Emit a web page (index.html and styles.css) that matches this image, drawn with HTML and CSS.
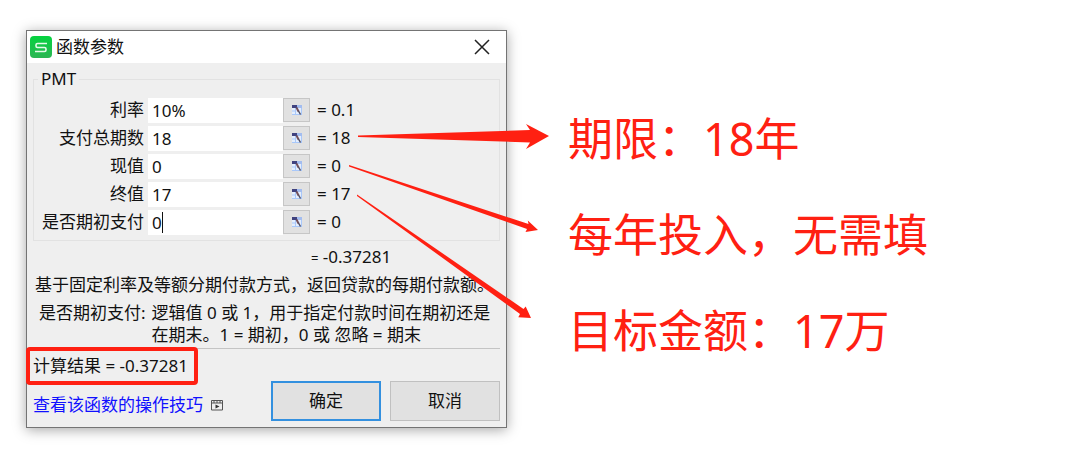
FILE: index.html
```
<!DOCTYPE html>
<html lang="zh-CN">
  <head>
    <meta charset="utf-8">
    <title>函数参数</title>
    <link rel="stylesheet" href="styles.css">
  </head>
  <body>

    <!-- shared by the five reference buttons -->
    <svg class="defs" width="0" height="0">
      <symbol id="pick" viewBox="0 0 12 12">
        <rect x="1" y="1" width="10" height="10" fill="#e4eefd"/>
        <path d="M1 10.500h10M10.500 1v10M1 7h4M4.500 4v6" fill="none" stroke="#a9c8fa"/>
        <rect x="1" y="1" width="5" height="3" fill="#40427f"/>
        <rect x="6" y="1" width="5" height="3" fill="#a3bdf0"/>
        <path d="M5.500 3.500l2 4" fill="none" stroke="#74505a" stroke-width="2"/>
        <path d="M7.500 7l2 3.500" fill="none" stroke="#4d4b60" stroke-width="1.500"/>
      </symbol>
    </svg>

    <div class="figure">
      <form class="dialog">
        <div class="titlebar">
          <svg class="logo" width="22" height="22" viewBox="0 0 22 22">
            <defs>
              <linearGradient id="green" x1="0" y1="0" x2="0" y2="1">
                <stop offset="0" stop-color="#05d33f"/>
                <stop offset="1" stop-color="#2bb553"/>
              </linearGradient>
            </defs>
            <rect width="22" height="22" rx="4" fill="url(#green)"/>
            <path d="M17 7.500H7.500Q6 7.500 6 9V10Q6 11.500 7.500 11.500H14.500Q16 11.500 16 13V14Q16 15.500 14.500 15.500H5" fill="none" stroke="#e6fbea" stroke-width="1.600"/>
          </svg>
          <h1>函数参数</h1>
          <button type="button" class="close" aria-label="关闭">
            <svg width="16" height="16" viewBox="0 0 16 16"><path d="M1 1l14 14M15 1L1 15" stroke="#222" stroke-width="1.500"/></svg>
          </button>
        </div>

        <div class="content">
          <fieldset>
            <legend>PMT</legend>
            <div class="row">
              <label for="rate">利率</label>
              <input id="rate" type="text" value="10%">
              <button type="button" class="pick" aria-label="选择利率"><svg width="12" height="12"><use href="#pick"/></svg></button>
              <output for="rate">= 0.1</output>
            </div>
            <div class="row">
              <label for="nper">支付总期数</label>
              <input id="nper" type="text" value="18">
              <button type="button" class="pick" aria-label="选择支付总期数"><svg width="12" height="12"><use href="#pick"/></svg></button>
              <output for="nper">= 18</output>
            </div>
            <div class="row">
              <label for="pv">现值</label>
              <input id="pv" type="text" value="0">
              <button type="button" class="pick" aria-label="选择现值"><svg width="12" height="12"><use href="#pick"/></svg></button>
              <output for="pv">= 0</output>
            </div>
            <div class="row">
              <label for="fv">终值</label>
              <input id="fv" type="text" value="17">
              <button type="button" class="pick" aria-label="选择终值"><svg width="12" height="12"><use href="#pick"/></svg></button>
              <output for="fv">= 17</output>
            </div>
            <div class="row">
              <label for="type">是否期初支付</label>
              <div class="active">
                <input id="type" type="text" value="0">
                <span class="caret"></span>
              </div>
              <button type="button" class="pick" aria-label="选择是否期初支付"><svg width="12" height="12"><use href="#pick"/></svg></button>
              <output for="type">= 0</output>
            </div>
          </fieldset>

          <p class="value"><small>=</small> -0.37281</p>
          <p class="about">基于固定利率及等额分期付款方式，返回贷款的每期付款额。</p>
          <dl>
            <dt>是否期初支付:</dt>
            <dd>逻辑值 0 或 1，用于指定付款时间在期初还是<br>在期末。1 = 期初，0 或 忽略 = 期末</dd>
          </dl>

          <div class="footer">
            <div class="info">
              <p class="result">计算结果 = -0.37281</p>
              <a href="#tips">查看该函数的操作技巧
                <svg width="12" height="12" viewBox="0 0 12 12">
                  <path d="M.5 1.500h11v9.500H.5zM.5 4h11M3 1.500V4M6 1.500V4M9 1.500V4" fill="none" stroke="#555"/>
                  <path d="M4.500 5.500l4 2-4 2z" fill="#333"/>
                </svg>
              </a>
            </div>
            <div class="buttons">
              <button type="submit" class="primary">确定</button>
              <button type="button">取消</button>
            </div>
          </div>
        </div>
      </form>

      <ul class="notes">
        <li>期限：18年</li>
        <li>每年投入，无需填</li>
        <li>目标金额：17万</li>
      </ul>

      <svg class="arrows" width="560" height="340" viewBox="0 0 560 340" fill="#ff2012">
        <path d="M358 135.500L530 130 526 124 549 136 526 149 530 142.500 358 137z"/>
        <path d="M349 165L528.500 224 527.800 220.500 538 230 525.500 232 527 229 349 166.500z"/>
        <path d="M357 194.500L523.500 309 525.700 306.500 531 318 518.300 317.300 520 314 357 196z"/>
      </svg>
    </div>

  </body>
</html>
```
FILE: styles.css
```
* {
  box-sizing: border-box;
}

body {
  margin: 0;
  background: #fff;
  color: #111;
  font-family: "Noto Sans", "Noto Sans CJK SC", sans-serif;
  font-size: 17px;
  line-height: 22px;
}

h1, p, ul, dl, dd {
  margin: 0;
  padding: 0;
}

button, input {
  font: inherit;
  color: inherit;
}

.defs {
  position: absolute;
}

.figure {
  position: relative;
  display: flex;
  align-items: flex-start;
  gap: 61px;
  padding: 30px 26px;
}

.dialog {
  flex: 0 1 481px;
  border: 1px solid #747474;
  background: #efefef;
  box-shadow: 0 2px 12px rgba(0, 0, 0, 0.35);
}

.titlebar {
  display: flex;
  align-items: center;
  gap: 4px;
  height: 32px;
  padding: 0 16px 0 3px;
  background: #fff;
}

.titlebar h1 {
  flex: 1;
  font-size: 17px;
  font-weight: normal;
}

.close {
  display: flex;
  padding: 0;
  border: 0;
  background: none;
}

.content {
  padding: 6px;
}

fieldset {
  margin: 0;
  padding: 7px 0 4px;
  border: 1px solid #e2e2e2;
}

legend {
  margin-left: 4px;
  padding: 0 3px;
  line-height: 20px;
}

.row {
  display: grid;
  grid-template-columns: 110px 1fr 27px 189px;
  align-items: center;
  height: 28px;
}

.row label {
  text-align: right;
}

.row input {
  width: 100%;
  height: 25px;
  padding: 0 4px;
  border: 0;
  outline: 0;
  background: #fff;
}

.row label, .row output {
  white-space: nowrap;
}

.row input, .active {
  min-width: 0;
}

.row > input, .row > .active {
  justify-self: end;
  width: calc(100% - 4px);
}

.active {
  position: relative;
  display: flex;
}

.caret {
  position: absolute;
  top: 2px;
  left: 14px;
  width: 1px;
  height: 21px;
  background: #111;
}

.row output {
  padding-left: 7px;
}

.pick {
  display: flex;
  align-items: center;
  justify-content: center;
  height: 24px;
  padding: 0;
  border: 1px solid #c6c6c6;
  background: #e1e1e1;
}

.value {
  padding: 5px 0 0 278px;
}

.value small {
  font-size: 13px;
}

.about {
  padding: 5px 0 6px 2px;
  white-space: nowrap;
}

dl {
  display: flex;
  gap: 6px;
  padding: 0 0 2px 6px;
  white-space: nowrap;
}

.footer {
  display: flex;
  justify-content: space-between;
  border-top: 1px solid #c4c4c4;
}

.info {
  display: flex;
  flex-direction: column;
  gap: 9px;
}

.result {
  align-self: flex-start;
  margin: -2px 0 0 -7px;
  padding: 4px 6px 4px 3px;
  border: 4px solid #ff2012;
  border-radius: 4px;
}

.info a {
  display: flex;
  align-items: center;
  gap: 8px;
  color: #1010ff;
  text-decoration: none;
  white-space: nowrap;
}

.buttons {
  display: flex;
  gap: 9px;
  padding-top: 32px;
}

.buttons button {
  width: 110px;
  height: 40px;
  border: 1px solid #c0c0c0;
  background: #e1e1e1;
}

.buttons .primary {
  border: 2px solid #3390df;
}

.notes {
  display: flex;
  flex-direction: column;
  gap: 36px;
  padding-top: 79px;
  list-style: none;
  color: #ff2012;
  font-size: 45px;
  line-height: 60px;
  white-space: nowrap;
}

/* pointers lie over the dialog and end beside the notes */
.arrows {
  position: absolute;
  top: 0;
  left: 0;
  pointer-events: none;
}
```
